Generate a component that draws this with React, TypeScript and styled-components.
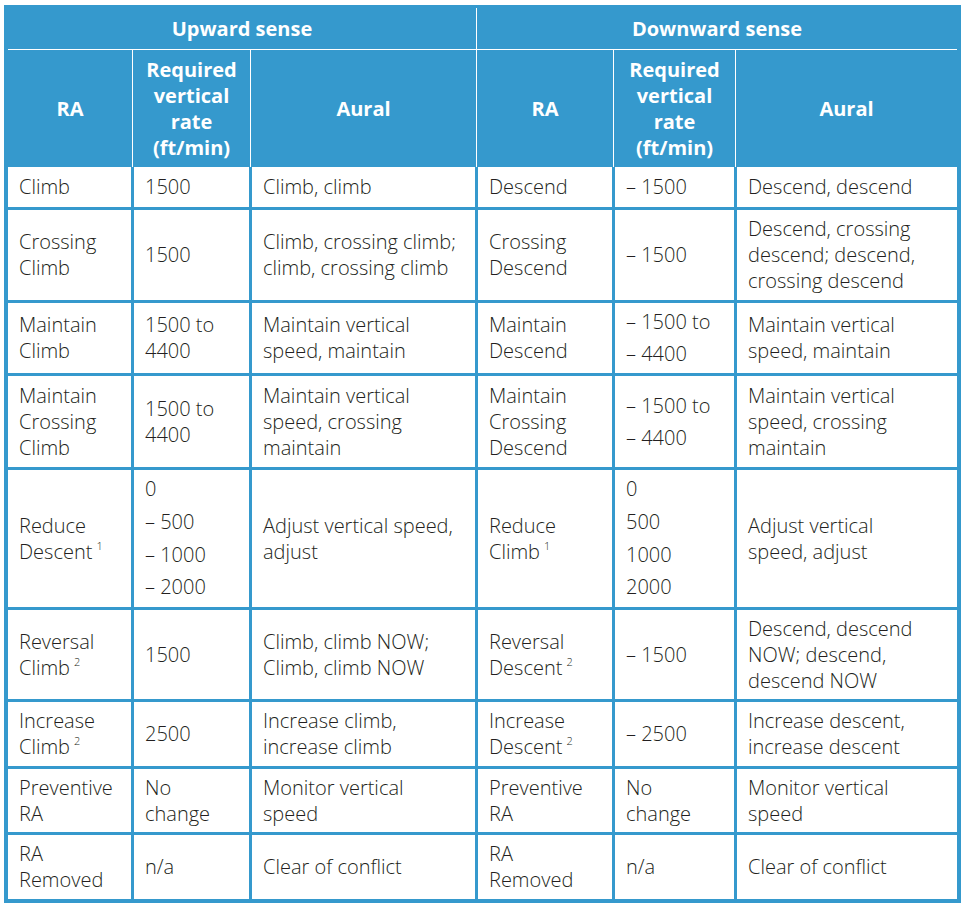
import React from "react";
import styled, { createGlobalStyle } from "styled-components";

const BLUE = "#3599cd";

const Global = createGlobalStyle`
  html, body { margin: 0; padding: 0; background: #ffffff; }
  body { font-family: "Open Sans", "Liberation Sans", sans-serif; }
`;

const Frame = styled.div`
  margin: 5px 0 0 4px;
  width: 957px;
  box-sizing: border-box;
  padding: 3px 4px 4px;
  background: ${BLUE};
`;

const Head = styled.div`
  display: grid;
  grid-template-columns: 124px 117px 225px 136px 121px 221px;
  grid-template-rows: 41px 117px;
  gap: 1px;
  background: #ffffff;
`;

const HeadCell = styled.div<{ $span?: number }>`
  grid-column: span ${(p) => p.$span ?? 1};
  background: ${BLUE};
  color: #ffffff;
  font-weight: 700;
  font-size: 20px;
  line-height: 26px;
  text-align: center;
  display: flex;
  flex-direction: column;
  align-items: center;
  justify-content: center;
  white-space: nowrap;
`;

const Body = styled.div`
  display: grid;
  grid-template-columns: 123px 115px 223px 134px 119px 220px;
  grid-template-rows: 40px 90px 70px 91px 137px 89px 64px 63px 64px;
  gap: 3px;
`;

const Cell = styled.div<{ $lh?: number }>`
  background: #ffffff;
  color: #231f20;
  font-size: 20px;
  font-weight: 300;
  line-height: ${(p) => p.$lh ?? 26}px;
  padding: 0 8px 0 11px;
  display: flex;
  flex-direction: column;
  justify-content: center;
  white-space: nowrap;
`;

const Sup = styled.sup`
  font-size: 11px;
  line-height: 0;
  vertical-align: 9px;
  margin-left: 4px;
`;

type Line = string | { t: string; sup: string };

type Row = {
  upRa: Line[];
  upRate: string[];
  upRateLh?: number;
  upAural: string[];
  downRa: Line[];
  downRate: string[];
  downRateLh?: number;
  downAural: string[];
};

const rows: Row[] = [
  {
    upRa: ["Climb"],
    upRate: ["1500"],
    upAural: ["Climb, climb"],
    downRa: ["Descend"],
    downRate: ["– 1500"],
    downAural: ["Descend, descend"],
  },
  {
    upRa: ["Crossing", "Climb"],
    upRate: ["1500"],
    upAural: ["Climb, crossing climb;", "climb, crossing climb"],
    downRa: ["Crossing", "Descend"],
    downRate: ["– 1500"],
    downAural: ["Descend, crossing", "descend; descend,", "crossing descend"],
  },
  {
    upRa: ["Maintain", "Climb"],
    upRate: ["1500 to", "4400"],
    upAural: ["Maintain vertical", "speed, maintain"],
    downRa: ["Maintain", "Descend"],
    downRate: ["– 1500 to", "– 4400"],
    downRateLh: 32,
    downAural: ["Maintain vertical", "speed, maintain"],
  },
  {
    upRa: ["Maintain", "Crossing", "Climb"],
    upRate: ["1500 to", "4400"],
    upAural: ["Maintain vertical", "speed, crossing", "maintain"],
    downRa: ["Maintain", "Crossing", "Descend"],
    downRate: ["– 1500 to", "– 4400"],
    downRateLh: 32,
    downAural: ["Maintain vertical", "speed, crossing", "maintain"],
  },
  {
    upRa: ["Reduce", { t: "Descent", sup: "1" }],
    upRate: ["0", "– 500", "– 1000", "– 2000"],
    upRateLh: 32.7,
    upAural: ["Adjust vertical speed,", "adjust"],
    downRa: ["Reduce", { t: "Climb", sup: "1" }],
    downRate: ["0", "500", "1000", "2000"],
    downRateLh: 32.7,
    downAural: ["Adjust vertical", "speed, adjust"],
  },
  {
    upRa: ["Reversal", { t: "Climb", sup: "2" }],
    upRate: ["1500"],
    upAural: ["Climb, climb NOW;", "Climb, climb NOW"],
    downRa: ["Reversal", { t: "Descent", sup: "2" }],
    downRate: ["– 1500"],
    downAural: ["Descend, descend", "NOW; descend,", "descend NOW"],
  },
  {
    upRa: ["Increase", { t: "Climb", sup: "2" }],
    upRate: ["2500"],
    upAural: ["Increase climb,", "increase climb"],
    downRa: ["Increase", { t: "Descent", sup: "2" }],
    downRate: ["– 2500"],
    downAural: ["Increase descent,", "increase descent"],
  },
  {
    upRa: ["Preventive", "RA"],
    upRate: ["No", "change"],
    upAural: ["Monitor vertical", "speed"],
    downRa: ["Preventive", "RA"],
    downRate: ["No", "change"],
    downAural: ["Monitor vertical", "speed"],
  },
  {
    upRa: ["RA", "Removed"],
    upRate: ["n/a"],
    upAural: ["Clear of conflict"],
    downRa: ["RA", "Removed"],
    downRate: ["n/a"],
    downAural: ["Clear of conflict"],
  },
];

const Lines: React.FC<{ lines: Line[] }> = ({ lines }) => (
  <>
    {lines.map((l, i) =>
      typeof l === "string" ? (
        <span key={i}>{l}</span>
      ) : (
        <span key={i}>
          {l.t}
          <Sup>{l.sup}</Sup>
        </span>
      )
    )}
  </>
);

const HeadLines: React.FC<{ lines: string[] }> = ({ lines }) => (
  <>
    {lines.map((l, i) => (
      <span key={i}>{l}</span>
    ))}
  </>
);

const rateHead = ["Required", "vertical", "rate", "(ft/min)"];

export default function App() {
  return (
    <>
      <Global />
      <Frame>
        <Head>
          <HeadCell $span={3}>Upward sense</HeadCell>
          <HeadCell $span={3}>Downward sense</HeadCell>
          <HeadCell>RA</HeadCell>
          <HeadCell>
            <HeadLines lines={rateHead} />
          </HeadCell>
          <HeadCell>Aural</HeadCell>
          <HeadCell>RA</HeadCell>
          <HeadCell>
            <HeadLines lines={rateHead} />
          </HeadCell>
          <HeadCell>Aural</HeadCell>
        </Head>
        <Body>
          {rows.map((r, i) => (
            <React.Fragment key={i}>
              <Cell>
                <Lines lines={r.upRa} />
              </Cell>
              <Cell $lh={r.upRateLh}>
                <Lines lines={r.upRate} />
              </Cell>
              <Cell>
                <Lines lines={r.upAural} />
              </Cell>
              <Cell>
                <Lines lines={r.downRa} />
              </Cell>
              <Cell $lh={r.downRateLh}>
                <Lines lines={r.downRate} />
              </Cell>
              <Cell>
                <Lines lines={r.downAural} />
              </Cell>
            </React.Fragment>
          ))}
        </Body>
      </Frame>
    </>
  );
}
